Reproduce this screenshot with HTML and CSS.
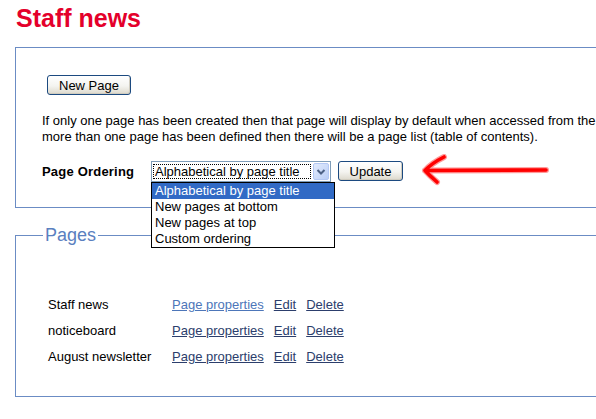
FILE: index.html
```html
<!DOCTYPE html>
<html lang="en">
<head>
<meta charset="utf-8">
<title>Staff news</title>
<link rel="stylesheet" href="styles.css">
</head>
<body>
<h1 class="title">Staff news</h1>
<div class="panel">
  <button class="btn btn-new" type="button">New Page</button>
  <p class="note">If only one page has been created then that page will display by default when accessed from the<br>more than one page has been defined then there will be a page list (table of contents).</p>
  <div class="order-row">
    <span class="order-label">Page Ordering</span>
    <div class="select">
      <span class="select-value"><span class="focus">Alphabetical by page title</span></span>
      <span class="select-btn">
        <svg width="16" height="17" viewBox="0 0 16 17">
          <defs>
            <linearGradient id="sb" x1="0" y1="0" x2="1" y2="1">
              <stop offset="0" stop-color="#e3ecfd"/>
              <stop offset="1" stop-color="#b9cdf6"/>
            </linearGradient>
          </defs>
          <rect x="0.5" y="0.5" width="15" height="16" rx="1.5" fill="url(#sb)" stroke="#b4c8f4"/>
          <path d="M4.5 7 L8 10.5 L11.5 7" fill="none" stroke="#4d6185" stroke-width="2"/>
        </svg>
      </span>
      <ul class="select-list">
        <li class="active">Alphabetical by page title</li>
        <li>New pages at bottom</li>
        <li>New pages at top</li>
        <li>Custom ordering</li>
      </ul>
    </div>
    <button class="btn btn-update" type="button">Update</button>
    <svg class="annot-arrow" width="130" height="34" viewBox="0 0 130 34">
      <g fill="none" stroke-linecap="round" stroke-linejoin="round">
        <path d="M125 16 L4 16.5 M23 3 Q11 9 4 16.5 Q9 22 16 28" stroke="#ff9a9a" stroke-width="6"/>
        <path d="M125 16 L4 16.5 M23 3 Q11 9 4 16.5 Q9 22 16 28" stroke="#ff0000" stroke-width="3.6"/>
      </g>
    </svg>
  </div>
</div>
<fieldset class="pages">
  <legend>Pages</legend>
  <table class="page-list">
    <tr>
      <td class="name">Staff news</td>
      <td><span class="links"><a href="#" class="link-light">Page properties</a><a href="#">Edit</a><a href="#">Delete</a></span></td>
    </tr>
    <tr>
      <td class="name">noticeboard</td>
      <td><span class="links"><a href="#">Page properties</a><a href="#">Edit</a><a href="#">Delete</a></span></td>
    </tr>
    <tr>
      <td class="name">August newsletter</td>
      <td><span class="links"><a href="#">Page properties</a><a href="#">Edit</a><a href="#">Delete</a></span></td>
    </tr>
  </table>
</fieldset>
</body>
</html>
```
FILE: styles.css
```css
html, body {
  margin: 0;
  overflow: hidden;
  background: #fff;
}
body {
  padding: 0 0 0 15px;
  width: 720px;
  font-family: "Liberation Sans", Arial, sans-serif;
  font-size: 13px;
  color: #000;
}
.title {
  margin: 0 0 14px 1px;
  padding-top: 4px;
  font-size: 25px;
  line-height: 29px;
  font-weight: bold;
  color: #e4002b;
}
.panel {
  border: 1px solid #6b8cc4;
  border-right: none;
  padding: 27px 0 26px 26px;
}
.btn {
  font-family: "Liberation Sans", Arial, sans-serif;
  font-size: 13px;
  color: #000;
  height: 20px;
  padding: 0;
  border: 1px solid #1c4a80;
  border-radius: 3px;
  background: linear-gradient(#ffffff, #f4f4f0 55%, #dcd8cc);
  box-shadow: inset -1px -1px 0 #d0ccbf;
}
.btn-new {
  display: block;
  margin-left: 5px;
  width: 84px;
}
.note {
  margin: 18px 0 16px;
  line-height: 16px;
  white-space: nowrap;
}
.order-row {
  display: flex;
  align-items: center;
  height: 20px;
}
.order-label {
  width: 109px;
  flex: none;
  font-weight: bold;
  letter-spacing: 0.2px;
}
.select {
  position: relative;
  flex: none;
  display: flex;
  align-items: center;
  box-sizing: border-box;
  width: 180px;
  height: 21px;
  padding: 1px;
  border: 1px solid #7f9db9;
  background: #fff;
}
.select-value {
  flex: 1;
  padding-right: 2px;
}
.focus {
  display: block;
  padding-left: 2px;
  line-height: 15px;
  outline: 1px dotted #000;
  outline-offset: -1px;
  white-space: nowrap;
  overflow: hidden;
}
.select-btn {
  display: flex;
  flex: none;
}
.select-list {
  position: absolute;
  top: 20px;
  left: -1px;
  z-index: 2;
  width: 182px;
  margin: 0;
  padding: 0;
  list-style: none;
  border: 1px solid #000;
  background: #fff;
}
.select-list li {
  height: 16px;
  line-height: 16px;
  padding-left: 3px;
  white-space: nowrap;
}
.select-list li.active {
  background: #316ac5;
  color: #fff;
}
.btn-update {
  margin-left: 7px;
  width: 65px;
  flex: none;
}
.annot-arrow {
  flex: none;
  margin-left: 18px;
}
.pages {
  margin: 17px 0 0;
  padding: 45px 0 27px 27px;
  border: 1px solid #6b8cc4;
  border-right: none;
}
.pages legend {
  padding: 0 2px;
  font-size: 18px;
  line-height: 21px;
  color: #5a80c0;
}
.page-list {
  border-collapse: collapse;
  margin-left: 5px;
}
.page-list td {
  height: 26px;
  padding: 0;
}
.page-list td.name {
  width: 124px;
}
.links {
  display: flex;
  gap: 10px;
}
.links a {
  color: #2c3e6c;
  text-decoration: underline;
}
.links a.link-light {
  color: #4d76b9;
}
```
